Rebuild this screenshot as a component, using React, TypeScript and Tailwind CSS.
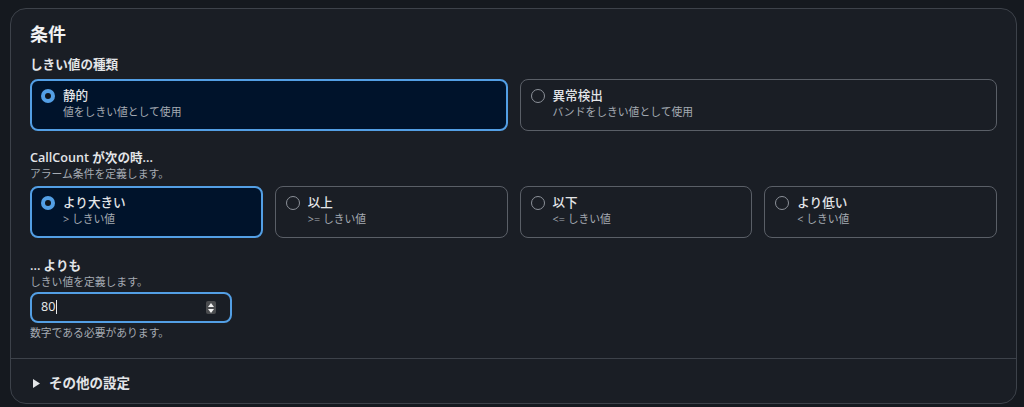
const font = {
  fontFamily: '"Open Sans", "Noto Sans CJK JP", "Noto Sans", sans-serif',
}

type Option = { label: string; desc: string; selected?: boolean }

const Radio = ({ selected }: { selected?: boolean }) =>
  selected ? (
    <span className="mt-[2px] flex h-[14px] w-[14px] shrink-0 items-center justify-center rounded-full bg-[#539fe5]">
      <span className="h-[6px] w-[6px] rounded-full bg-[#0f141a]" />
    </span>
  ) : (
    <span className="mt-[2px] h-[14px] w-[14px] shrink-0 rounded-full border-[1.5px] border-[#8c9199]" />
  )

const Tile = ({ label, desc, selected }: Option) => (
  <div
    className={
      selected
        ? 'flex h-[52px] gap-2 rounded-[8px] border-2 border-[#539fe5] bg-[#00132b] pt-[6px] pl-[9px]'
        : 'flex h-[52px] gap-2 rounded-[8px] border border-[#5a5f67] pt-[7px] pl-[10px]'
    }
  >
    <Radio selected={selected} />
    <div>
      <div className="text-[12.6px] font-medium leading-[18px] text-[#e3e5e8]">{label}</div>
      <div className="text-[10.8px] leading-[14px] text-[#a5abb3]">{desc}</div>
    </div>
  </div>
)

const thresholdTypes: Option[] = [
  { label: '静的', desc: '値をしきい値として使用', selected: true },
  { label: '異常検出', desc: 'バンドをしきい値として使用' },
]

const conditions: Option[] = [
  { label: 'より大きい', desc: '> しきい値', selected: true },
  { label: '以上', desc: '>= しきい値' },
  { label: '以下', desc: '<= しきい値' },
  { label: 'より低い', desc: '< しきい値' },
]

export default function App() {
  return (
    <div className="h-[407px] w-[1024px] overflow-hidden bg-[#15191f] pt-[8px] pl-[10px]" style={font}>
      <div className="w-[1007px] rounded-[16px] border border-[#3d424a] bg-[#1a1e25]">
        <div className="px-[19px] pt-[13px]">
          <h2 className="text-[18px] font-bold leading-[24px] text-[#f0f1f3]">条件</h2>

          <div className="mt-[9px] text-[12.6px] font-semibold leading-[20px] text-[#e3e5e8]">しきい値の種類</div>
          <div className="mt-[4px] grid grid-cols-2 gap-3">
            {thresholdTypes.map((o) => (
              <Tile key={o.label} {...o} />
            ))}
          </div>

          <div className="mt-[18px] text-[12.6px] font-semibold leading-[18px] text-[#e3e5e8]">CallCount が次の時...</div>
          <div className="text-[10.8px] leading-[14px] text-[#a5abb3]">アラーム条件を定義します。</div>
          <div className="mt-[5px] grid grid-cols-4 gap-3">
            {conditions.map((o) => (
              <Tile key={o.label} {...o} />
            ))}
          </div>

          <div className="mt-[19px] text-[12.6px] font-semibold leading-[18px] text-[#e3e5e8]">... よりも</div>
          <div className="text-[10.8px] leading-[14px] text-[#a5abb3]">しきい値を定義します。</div>
          <div className="mt-[3px] flex h-[31px] w-[202px] items-center justify-between rounded-[8px] border-2 border-[#539fe5] pl-[9px] pr-[14px]">
            <span className="flex items-center text-[12.6px] text-[#e9ebed]">
              80
              <span className="ml-[1px] h-[14px] w-px bg-[#e9ebed]" />
            </span>
            <span className="flex h-[13px] w-[10px] flex-col items-center justify-center gap-[2px] rounded-[2px] bg-[#4b4d50]">
              <svg width="6" height="4" viewBox="0 0 6 4">
                <path d="M3 0L6 4H0z" fill="#f2f2f2" />
              </svg>
              <svg width="6" height="4" viewBox="0 0 6 4">
                <path d="M0 0h6L3 4z" fill="#f2f2f2" />
              </svg>
            </span>
          </div>
          <div className="mt-[3px] text-[10.8px] leading-[14px] text-[#a5abb3]">数字である必要があります。</div>
        </div>

        <div className="mt-[18px] border-t border-[#3d424a]" />

        <div className="flex items-center gap-[9px] px-[22px] pt-[14px] pb-[10px]">
          <svg width="7" height="9" viewBox="0 0 7 9">
            <path d="M0 0L7 4.5L0 9z" fill="#e3e5e8" />
          </svg>
          <span className="text-[13.5px] font-semibold leading-[20px] text-[#e3e5e8]">その他の設定</span>
        </div>
      </div>
    </div>
  )
}
